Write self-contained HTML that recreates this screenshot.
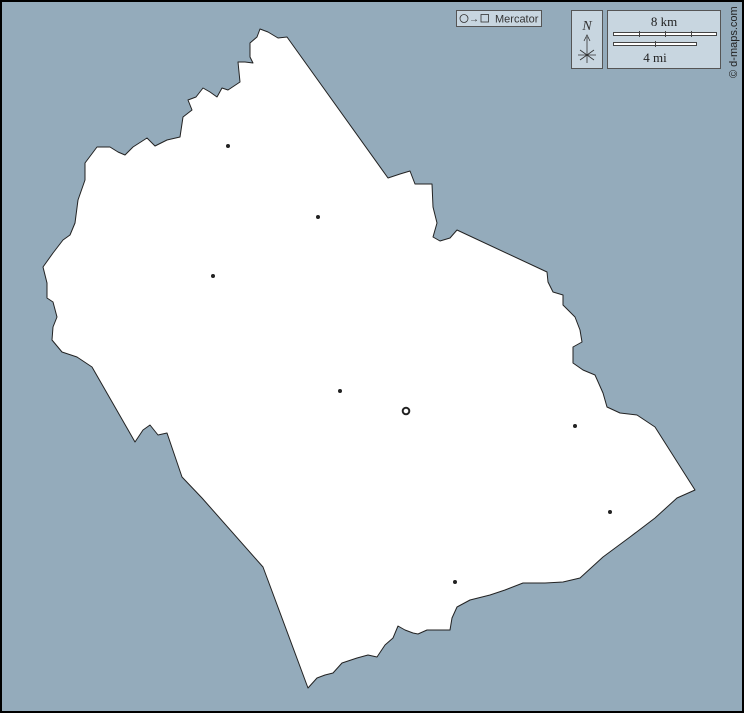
<!DOCTYPE html>
<html><head><meta charset="utf-8"><style>
html,body{margin:0;padding:0;}
body{width:744px;height:713px;overflow:hidden;background:#000;}
</style></head><body>
<svg width="744" height="713" viewBox="0 0 744 713" xmlns="http://www.w3.org/2000/svg" style="display:block">
<rect x="0" y="0" width="744" height="713" fill="#000"/>
<rect x="2" y="2" width="740" height="709" fill="#94abbb"/>
<path fill="#fff" stroke="#222" stroke-width="1" stroke-linejoin="round" d="
M260,29 L268,32 L278,38 L287,37 L388,178 L400,174 L410,171 L415,184 L432,184 L433,207 L437,223 L433,237 L440,241 L450,238 L457,230
L547,272 L548,282 L553,292 L563,295 L563,305 L575,317 L580,330 L582,342 L573,347 L573,363 L583,370 L595,375 L603,393 L607,407
L620,413 L637,415 L655,427 L695,490 L677,498 L655,518 L630,537 L603,557 L580,578 L563,582 L545,583 L523,583 L505,590 L490,595 L470,600 L457,607 L452,618 L450,630
L427,630 L418,634 L413,633 L405,630 L398,626 L393,638 L385,645 L377,657 L368,655 L357,658 L342,663 L333,673 L325,675 L317,678 L308,688
L263,567 L202,498 L182,477 L167,433 L158,435 L150,425 L143,430 L135,442 L92,367 L77,357 L62,352 L52,340 L53,327 L57,317 L53,302 L47,298 L47,283 L43,267 L53,253
L63,240 L70,235 L75,223 L78,200 L85,180 L85,163 L97,147 L110,147 L118,152 L125,155 L133,147 L147,138 L155,146 L167,140 L180,137 L183,117 L192,110 L188,100 L196,97 L203,88 L210,92 L217,97 L222,88 L228,90 L240,82 L238,62 L245,62 L253,63 L250,57 L250,43 L257,37 Z"/>
<g fill="#222">
<circle cx="228" cy="146" r="2"/>
<circle cx="318" cy="217" r="2"/>
<circle cx="213" cy="276" r="2"/>
<circle cx="340" cy="391" r="2"/>
<circle cx="575" cy="426" r="2"/>
<circle cx="610" cy="512" r="2"/>
<circle cx="455" cy="582" r="2"/>
</g>
<circle cx="406" cy="411" r="3.3" fill="none" stroke="#222" stroke-width="2"/>
<!-- projection box -->
<rect x="456.5" y="10.5" width="85" height="16" fill="#c8d6e0" stroke="#555" stroke-width="1"/>
<circle cx="464" cy="18.5" r="4" fill="none" stroke="#333" stroke-width="0.8"/>
<text x="469" y="22" font-family="Liberation Sans, sans-serif" font-size="10" fill="#333">→</text>
<rect x="481" y="14.5" width="7.5" height="7.5" fill="none" stroke="#333" stroke-width="0.8"/>
<text x="495" y="22.5" font-family="Liberation Sans, sans-serif" font-size="11" fill="#333">Mercator</text>
<!-- north -->
<rect x="571.5" y="10.5" width="31" height="58" fill="#c8d6e0" stroke="#555" stroke-width="1"/>
<text x="587" y="30" text-anchor="middle" font-family="Liberation Serif, serif" font-style="italic" font-size="14" fill="#333">N</text>
<path d="M587,37 L587,63 M584,41 L587,35 L590,41 M580,50 L594,60 M594,50 L580,60 M578,55 L596,55" stroke="#333" stroke-width="0.8" fill="none"/>
<!-- scale -->
<rect x="607.5" y="10.5" width="113" height="58" fill="#c8d6e0" stroke="#555" stroke-width="1"/>
<text x="664" y="26" text-anchor="middle" font-family="Liberation Serif, serif" font-size="13" fill="#222">8 km</text>
<rect x="613.5" y="32.5" width="103" height="3" fill="#fff" stroke="#444" stroke-width="1"/>
<path d="M639.5,31 V37 M665.5,31 V37 M691.5,31 V37" stroke="#444" stroke-width="1"/>
<rect x="613.5" y="42.5" width="83" height="3" fill="#fff" stroke="#444" stroke-width="1"/>
<path d="M655.5,41 V47" stroke="#444" stroke-width="1"/>
<text x="655" y="62" text-anchor="middle" font-family="Liberation Serif, serif" font-size="13" fill="#222">4 mi</text>
<text transform="translate(737,78) rotate(-90)" font-family="Liberation Sans, sans-serif" font-size="11" fill="#222">© d-maps.com</text>
</svg>
</body></html>
